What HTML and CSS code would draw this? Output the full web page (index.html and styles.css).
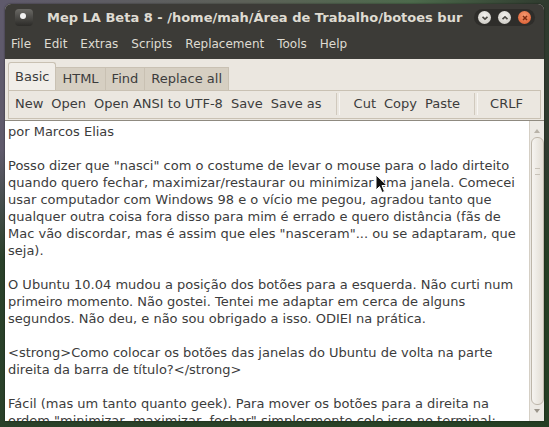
FILE: index.html
```html
<!DOCTYPE html>
<html lang="pt">
<head>
    <meta charset="UTF-8">
    <title>Mep LA Beta 8</title>
    <link rel="stylesheet" href="styles.css">
</head>
<body>
    <div class="window">
        <div class="titlebar">
            <div class="app-icon"><span class="dot"></span></div>
            <div class="title">Mep LA Beta 8 - /home/mah/Área de Trabalho/botoes bur</div>
            <div class="wm-buttons">
                <span class="wm-btn">
                    <svg width="12" height="12" viewBox="0 0 12 12"><path d="M3.5 4.8 L6 7.2 L8.5 4.8" fill="none" stroke="#4a4843" stroke-width="1.6"/></svg>
                </span>
                <span class="wm-btn">
                    <svg width="12" height="12" viewBox="0 0 12 12"><path d="M3.5 7.2 L6 4.8 L8.5 7.2" fill="none" stroke="#4a4843" stroke-width="1.6"/></svg>
                </span>
                <span class="wm-btn close">
                    <svg width="12" height="12" viewBox="0 0 12 12"><path d="M4 4 L8 8 M8 4 L4 8" fill="none" stroke="#7a2a10" stroke-width="1.5"/></svg>
                </span>
            </div>
        </div>

        <div class="menubar">
            <span>File</span>
            <span>Edit</span>
            <span>Extras</span>
            <span>Scripts</span>
            <span>Replacement</span>
            <span>Tools</span>
            <span>Help</span>
        </div>

        <div class="notebook">
            <div class="tabs">
                <span class="tab active">Basic</span>
                <span class="tab">HTML</span>
                <span class="tab">Find</span>
                <span class="tab">Replace all</span>
            </div>
            <div class="toolbar">
                <span class="tool">New</span>
                <span class="tool">Open</span>
                <span class="tool">Open ANSI to UTF-8</span>
                <span class="tool">Save</span>
                <span class="tool">Save as</span>
                <span class="sep"></span>
                <span class="tool">Cut</span>
                <span class="tool">Copy</span>
                <span class="tool">Paste</span>
                <span class="sep"></span>
                <span class="tool crlf">CRLF</span>
            </div>
        </div>

        <div class="editor">
            <div class="text">por Marcos Elias

Posso dizer que "nasci" com o costume de levar o mouse para o lado dirteito
quando quero fechar, maximizar/restaurar ou minimizar uma janela. Comecei
usar computador com Windows 98 e o vício me pegou, agradou tanto que
qualquer outra coisa fora disso para mim é errado e quero distância (fãs de
Mac vão discordar, mas é assim que eles "nasceram"... ou se adaptaram, que
seja).

O Ubuntu 10.04 mudou a posição dos botões para a esquerda. Não curti num
primeiro momento. Não gostei. Tentei me adaptar em cerca de alguns
segundos. Não deu, e não sou obrigado a isso. ODIEI na prática.

&lt;strong&gt;Como colocar os botões das janelas do Ubuntu de volta na parte
direita da barra de título?&lt;/strong&gt;

Fácil (mas um tanto quanto geek). Para mover os botões para a direita na
ordem "minimizar, maximizar, fechar" simplesmente cole isso no terminal:</div>
            <div class="scrollbar">
                <span class="arrow up"></span>
                <div class="thumb"><span class="grip"></span></div>
                <span class="arrow down"></span>
            </div>
            <svg class="cursor" width="14" height="20" viewBox="0 0 14 20">
                <path d="M1 1 L1 16 L4.5 12.5 L7 18.5 L9.5 17.5 L7 11.5 L12 11.5 Z" fill="#111" stroke="#fff" stroke-width="1"/>
            </svg>
        </div>
    </div>
</body>
</html>
```

FILE: styles.css
```css
body {
    margin: 0;
    width: 549px;
    height: 427px;
    overflow: hidden;
    font-family: "DejaVu Sans", sans-serif;
    background:
        linear-gradient(to bottom, rgba(0, 0, 0, 0) 150px, rgba(36, 62, 34, 0.9) 260px),
        linear-gradient(to right, #5f5a6c 0%, #5d6158 45%, #4d6a4c 75%, #2f3a2e 100%);
}

/* Janela */
.window {
    margin: 4px 0 0 5px;
    width: 539px;
    height: 417px;
    border-radius: 6px 6px 0 0;
    overflow: hidden;
    display: flex;
    flex-direction: column;
    background-color: #ebe7e0;
    box-shadow: 0 0 2px rgba(0, 0, 0, 0.6);
}
.titlebar,
.menubar,
.notebook {
    flex-shrink: 0;
}

/* Barra de título */
.titlebar {
    height: 27px;
    display: flex;
    align-items: center;
    background-color: #3c3b37;
    color: #dfdbd2;
}
.app-icon {
    width: 18px;
    height: 17px;
    margin: 0 14px 0 10px;
    border-radius: 4px;
    background: linear-gradient(#6a6965, #2c2b28);
    position: relative;
}
.dot {
    position: absolute;
    left: 5px;
    top: 4px;
    width: 6px;
    height: 6px;
    border-radius: 50%;
    background-color: #f2f2f2;
}
.title {
    flex: 1;
    font-size: 13px;
    font-weight: bold;
    white-space: nowrap;
    overflow: hidden;
}
.wm-buttons {
    display: flex;
    gap: 7px;
    padding: 2px 4px;
    margin-right: 9px;
    border-radius: 9px;
    background-color: #2e2d2a;
}
.wm-btn {
    width: 13px;
    height: 13px;
    border-radius: 50%;
    background: radial-gradient(circle at 50% 35%, #f4f3f0, #c6c3bc);
    display: flex;
    align-items: center;
    justify-content: center;
}
.wm-btn.close {
    background: radial-gradient(circle at 50% 35%, #f59a70, #d9552a);
}

/* Menu */
.menubar {
    height: 26px;
    padding: 0 0 2px 6px;
    display: flex;
    align-items: center;
    gap: 13px;
    background-color: #3c3b37;
    color: #dfdbd2;
    font-size: 12px;
}

/* Abas */
.notebook {
    padding: 3px 3px 0 3px;
}
.tabs {
    display: flex;
    align-items: flex-end;
    height: 28px;
    font-size: 13px;
    color: #3c3c3c;
}
.tab {
    padding: 0 6px;
    line-height: 22px;
    background-color: #d6cfc2;
    border-top: 1px solid #c9c1b3;
    border-right: 1px solid #c9c1b3;
}
.tab.active {
    line-height: 27px;
    background-color: #f1eee9;
    border: 1px solid #c9c1b3;
    border-bottom: none;
    border-radius: 3px 3px 0 0;
}
.toolbar {
    height: 25px;
    padding: 0 0 2px 2px;
    display: flex;
    align-items: center;
    border: 1px solid #c9c1b3;
    background-color: #ebe7e0;
    font-size: 13px;
    color: #3c3c3c;
    white-space: nowrap;
    overflow: hidden;
}
.tool {
    flex-shrink: 0;
    margin: 0 4px;
}
.sep {
    flex-shrink: 0;
    width: 2px;
    height: 22px;
    margin: 0 10px;
    border-left: 1px solid #d0c9bd;
    border-right: 1px solid #f7f5f2;
}
.crlf {
    margin-left: 2px;
}

/* Editor */
.editor {
    flex: 1;
    min-height: 0;
    display: flex;
    margin-top: 1px;
    background-color: #ffffff;
    border-top: 1px solid #8f8a80;
    position: relative;
}
.text {
    flex: 1;
    padding: 2px 0 0 3px;
    white-space: pre;
    overflow: hidden;
    font-size: 13px;
    line-height: 17px;
    color: #3c3c3c;
}
.scrollbar {
    width: 14px;
    display: flex;
    flex-direction: column;
    align-items: center;
    background-color: #ece9e4;
    border-left: 1px solid #d5cfc5;
}
.arrow {
    width: 0;
    height: 0;
    margin: 8px 0 4px 0;
    border-left: 3px solid transparent;
    border-right: 3px solid transparent;
}
.arrow.up {
    border-bottom: 4px solid #b8b2a8;
}
.arrow.down {
    margin: 4px 0 8px 0;
    border-top: 4px solid #9a948a;
}
.thumb {
    flex: 1;
    width: 11px;
    border: 1px solid #bdb6aa;
    border-radius: 6px;
    background: linear-gradient(to right, #f6f4f1, #e2ddd4);
    display: flex;
    justify-content: center;
}
.grip {
    width: 5px;
    height: 5px;
    margin-top: 30px;
    border-top: 1px solid #c8c2b8;
    border-bottom: 1px solid #c8c2b8;
}
.cursor {
    position: absolute;
    left: 370px;
    top: 53px;
}
```
